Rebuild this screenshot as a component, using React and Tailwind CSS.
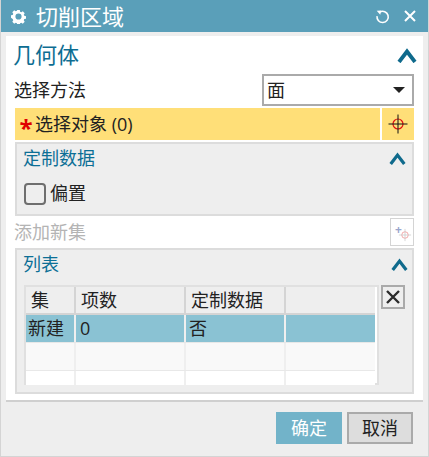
const F = { fontFamily: '"Open Sans", "Noto Sans CJK SC", sans-serif' };

function Chevron({ className }) {
  return (
    <svg viewBox="0 0 20 15" className={className}>
      <path d="M2 14 L10 3.5 L18 14" fill="none" stroke="#0f6a8c" strokeWidth="3.8" />
    </svg>
  );
}

function Target({ faded }) {
  return (
    <svg viewBox="0 0 20 20" className="w-5 h-5">
      <g opacity={faded ? 0.45 : 1}>
        <circle cx="10" cy="10" r="5" stroke="#e01010" strokeWidth="1.2" fill="none" />
        <path d="M10 0.5V19.5M0.5 10H19.5" stroke={faded ? "#777" : "#111"} strokeWidth="1" fill="none" />
      </g>
    </svg>
  );
}

const rows = [
  { c: ["新建", "0", "否", ""], bg: "bg-[#8ac2d3]", h: "h-[28px]", tc: "text-[#222]" },
  { c: ["", "", "", ""], bg: "bg-[#f9f9f9]", h: "h-[28px]", tc: "" },
  { c: ["", "", "", ""], bg: "bg-white", h: "h-[14px]", tc: "" },
];
const cols = "grid grid-cols-[50px_110px_100px_89px] w-[349px]";

export default function App() {
  return (
    <div style={F} className="w-[429px] h-[457px] bg-[#eeeeee] border-l border-r border-b border-[#d4d4d4] flex flex-col overflow-hidden">
      <div className="h-[32px] shrink-0 bg-[#5a9fb9] flex items-center pl-[11px] pr-[13px] text-white -ml-px -mr-px">
        <svg viewBox="0 0 16 16" className="w-[15px] h-[15px]">
          <path fill="#fff" fillRule="evenodd" d="M6.6 1h2.8l.3 1.8 1.3.6 1.6-1 2 2-1 1.6.6 1.3 1.8.3v2.8l-1.8.3-.6 1.3 1 1.6-2 2-1.6-1-1.3.6-.3 1.8H6.6l-.3-1.8-1.3-.6-1.6 1-2-2 1-1.6-.6-1.3L0 9.4V6.6l1.8-.3.6-1.3-1-1.6 2-2 1.6 1 1.3-.6zM8 4.7a3.3 3.3 0 1 0 0 6.6 3.3 3.3 0 0 0 0-6.6z" />
        </svg>
        <span className="ml-[10px] text-[22px] leading-none">切削区域</span>
        <svg viewBox="0 0 16 16" className="ml-auto w-[15px] h-[15px]">
          <path d="M5.2 3.2A6 6 0 1 1 2.2 7.5" fill="none" stroke="#fff" strokeWidth="1.7" />
          <path d="M1.8 1.8 L6.6 1.6 L5.6 6 Z" fill="#fff" />
        </svg>
        <svg viewBox="0 0 12 12" className="ml-[14px] w-[12px] h-[12px]">
          <path d="M1 1L11 11M11 1L1 11" stroke="#fff" strokeWidth="2" fill="none" />
        </svg>
      </div>

      <div className="mt-[4px] ml-[5px] mr-[5px] h-[366px] bg-white border-b-2 border-[#cfcfcf] px-[9px] shrink-0">
        <div className="h-[36px] mb-[2px] flex items-center justify-between text-[#0d6d92]">
          <span className="text-[22px] leading-none ml-[-2px]">几何体</span>
          <Chevron className="w-[20px] h-[15px] mr-[-3px] mt-[2px]" />
        </div>

        <div className="h-[32px] flex items-center justify-between text-[18px] text-[#222]">
          <span className="ml-[-1px]">选择方法</span>
          <div className="w-[152px] h-[32px] border-2 border-[#aaaaaa] flex items-center justify-between pl-[3px] pr-[7px] bg-white">
            <span>面</span>
            <span className="w-0 h-0 border-l-[6px] border-r-[6px] border-t-[6px] border-l-transparent border-r-transparent border-t-[#222]" />
          </div>
        </div>

        <div className="mt-[2px] h-[32px] flex gap-[2px]">
          <div className="flex-1 bg-[#ffdf78] flex items-center pl-[2px] text-[18px] text-[#222]">
            <span className="text-[#e00000] text-[24px] font-bold leading-none w-[18px] text-center pt-[8px]">*</span>
            <span>选择对象 (0)</span>
          </div>
          <div className="w-[32px] bg-[#ffdf78] flex items-center justify-center">
            <Target />
          </div>
        </div>

        <div className="mt-[2px] h-[74px] bg-[#eeeeee] border-2 border-[#dcdcdc] px-[6px]">
          <div className="h-[28px] flex items-center justify-between text-[18px] text-[#0c6f96]">
            <span>定制数据</span>
            <Chevron className="w-[17px] h-[13px]" />
          </div>
          <div className="mt-[8px] ml-[1px] flex items-center gap-[4px] text-[18px] text-[#222]">
            <span className="w-[22px] h-[22px] rounded-[4px] border-2 border-[#6e6e6e]" />
            <span>偏置</span>
          </div>
        </div>

        <div className="h-[32px] flex items-center justify-between text-[18px] text-[#b4b4b4]">
          <span className="ml-[-1px]">添加新集</span>
          <div className="w-[24px] h-[28px] border border-[#d4d4d4] flex items-center justify-center relative">
            <span className="absolute left-[4px] top-[5px] text-[#9aa6cc] text-[12px] font-bold leading-none">+</span>
            <div className="ml-[6px] mt-[5px] scale-[0.65]"><Target faded /></div>
          </div>
        </div>

        <div className="h-[146px] bg-[#eeeeee] border-2 border-[#dcdcdc] pl-[7px]">
          <div className="h-[28px] flex items-center justify-between text-[18px] text-[#0c6f96] pr-[4px]">
            <span className="ml-[-1px]">列表</span>
            <Chevron className="w-[17px] h-[13px]" />
          </div>
          <div className="mt-[7px] flex gap-[2px] items-start">
            <div className="w-[355px] h-[100px] bg-white border-2 border-[#e0e0e0] text-[18px] text-[#222]">
              <div className={`${cols} h-[28px] bg-[#eeeeee] border-b-2 border-[#d4d4d4]`}>
                {["集", "项数", "定制数据", ""].map((t, i) => (
                  <div key={i} className={`flex items-center pl-[5px] ${i < 3 ? "border-r-2 border-[#d4d4d4]" : ""}`}>{t}</div>
                ))}
              </div>
              {rows.map((r, i) => (
                <div key={i} className={`${cols} ${r.h} ${r.bg} ${r.tc} ${i < 2 ? "border-b border-[#e8e8e8]" : ""}`}>
                  {r.c.map((t, j) => (
                    <div key={j} className={`flex items-center ${j === 1 ? "pl-[4px]" : j === 0 ? "pl-[2px]" : "pl-[3px]"} ${j < 3 ? "border-r-2 border-[#efefef]" : ""}`}>{t}</div>
                  ))}
                </div>
              ))}
            </div>
            <div className="w-[24px] h-[24px] border-2 border-[#aaaaaa] flex items-center justify-center">
              <svg viewBox="0 0 14 14" className="w-[14px] h-[14px]">
                <path d="M1 1L13 13M13 1L1 13" stroke="#2b2b2b" strokeWidth="2.4" fill="none" />
              </svg>
            </div>
          </div>
        </div>
      </div>

      <div className="mt-[10px] pr-[15px] flex justify-end gap-[5px] text-[18px]">
        <div className="w-[66px] h-[32px] bg-[#72b3c9] text-white flex items-center justify-center">确定</div>
        <div className="w-[66px] h-[32px] bg-[#dddddd] border-2 border-[#aaaaaa] text-[#222] flex items-center justify-center">取消</div>
      </div>
    </div>
  );
}
